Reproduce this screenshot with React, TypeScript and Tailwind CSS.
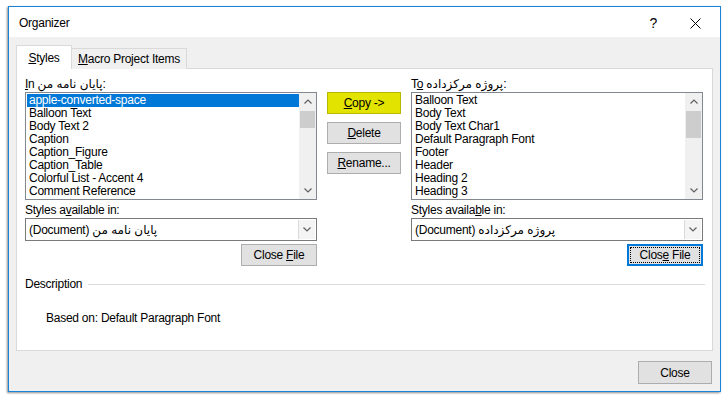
import React from 'react';

const FONT = "font-['Liberation_Sans','DejaVu_Sans',sans-serif]";

const LEFT_STYLES = [
    'apple-converted-space',
    'Balloon Text',
    'Body Text 2',
    'Caption',
    'Caption_Figure',
    'Caption_Table',
    'Colorful List - Accent 4',
    'Comment Reference',
];

const RIGHT_STYLES = [
    'Balloon Text',
    'Body Text',
    'Body Text Char1',
    'Default Paragraph Font',
    'Footer',
    'Header',
    'Heading 2',
    'Heading 3',
];

const Chevron: React.FC<{ dir: 'up' | 'down' }> = ({ dir }) => (
    <svg width="8" height="5" viewBox="0 0 8 5">
        <path
            d={dir === 'up' ? 'M0.5 4.5 L4 1 L7.5 4.5' : 'M0.5 0.5 L4 4 L7.5 0.5'}
            fill="none"
            stroke="#606060"
            strokeWidth="1.2"
        />
    </svg>
);

const ScrollBar: React.FC<{ thumb: string }> = ({ thumb }) => (
    <div className="w-[17px] h-full bg-[#f0f0f0] flex flex-col">
        <div className="h-[17px] flex items-center justify-center">
            <Chevron dir="up" />
        </div>
        <div className="flex-1 px-[1px] pt-[1px]">
            <div className={`${thumb} bg-[#cdcdcd]`} />
        </div>
        <div className="h-[17px] flex items-center justify-center">
            <Chevron dir="down" />
        </div>
    </div>
);

const StyleList: React.FC<{ items: string[]; selected?: number; thumb: string }> = ({ items, selected, thumb }) => (
    <div className="h-[108px] border border-[#828790] bg-white flex">
        <div className="flex-1 pl-[1px] pt-[1px]">
            {items.map((s, i) => (
                <div
                    key={s}
                    className={`h-[13px] leading-[13px] pl-[2px] whitespace-nowrap ${i === selected ? 'bg-[#0078d7] text-white' : 'text-black'}`}
                >
                    {s}
                </div>
            ))}
        </div>
        <ScrollBar thumb={thumb} />
    </div>
);

const Combo: React.FC<{ value: string }> = ({ value }) => (
    <div className="h-[23px] border border-[#7a7a7a] bg-white flex items-stretch">
        <div className="flex-1 flex items-center pl-[3px] whitespace-nowrap">{value}</div>
        <div className="w-[17px] my-[1px] mr-[1px] border-l border-[#dadada] bg-[#f4f4f4] flex items-center justify-center">
            <Chevron dir="down" />
        </div>
    </div>
);

const Btn: React.FC<{ children: React.ReactNode; className?: string }> = ({ children, className = '' }) => (
    <div className={`h-[22px] border border-[#adadad] bg-[#e1e1e1] flex items-center justify-center text-black ${className}`}>
        {children}
    </div>
);

const App: React.FC = () => {
    return (
        <div className={`w-[727px] h-[397px] bg-white pl-[8px] pt-[6px] text-[12px] tracking-[-0.25px] text-black ${FONT}`}>
            <div className="w-[713px] h-[386px] border border-[#1883d7] shadow-[-1px_1px_2px_rgba(0,0,0,0.45)] flex flex-col">
                {/* Title bar */}
                <div className="h-[30px] bg-white flex items-center pl-[10px] pt-[2px]">
                    <span className="text-[12px]">Organizer</span>
                    <span className="ml-auto mr-[33px] text-[14px] leading-none">?</span>
                    <svg width="11" height="11" viewBox="0 0 11 11" className="mr-[19px]">
                        <path d="M0.5 0.5 L10.5 10.5 M10.5 0.5 L0.5 10.5" stroke="#000" strokeWidth="1" />
                    </svg>
                </div>

                {/* Body */}
                <div className="flex-1 bg-[#f0f0f0] px-[7px] pt-[8px] flex flex-col">
                    {/* Tabs */}
                    <div className="h-[24px] flex items-end relative z-10 -mb-px">
                        <div className="w-[56px] h-[24px] bg-white border border-b-0 border-[#d9d9d9] flex items-center justify-center">
                            <span><span className="underline">S</span>tyles</span>
                        </div>
                        <div className="w-[115px] h-[21px] bg-[#f0f0f0] border border-l-0 border-b-0 border-[#d9d9d9] flex items-center justify-center">
                            <span><span className="underline">M</span>acro Project Items</span>
                        </div>
                    </div>

                    {/* Panel */}
                    <div className="w-[697px] h-[283px] bg-white border border-[#d9d9d9] pl-[8px] pr-[7px] flex flex-col">
                        <div className="flex">
                            {/* Left column */}
                            <div className="w-[292px] flex flex-col">
                                <div className="h-[23px] flex items-end leading-[15px]">
                                    <span><span className="underline">I</span>n پایان نامه من:</span>
                                </div>
                                <StyleList items={LEFT_STYLES} selected={0} thumb="h-[17px]" />
                                <div className="h-[18px] flex items-end leading-[15px]">
                                    <span>Styles a<span className="underline">v</span>ailable in:</span>
                                </div>
                                <Combo value="(Document) پایان نامه من" />
                                <Btn className="mt-[3px] w-[76px] self-end">
                                    <span>Close <span className="underline">F</span>ile</span>
                                </Btn>
                            </div>

                            {/* Buttons */}
                            <div className="w-[74px] ml-[10px] pt-[23px] flex flex-col gap-[8px]">
                                <Btn className="!bg-[#e3e300] !border-[#b8b800]">
                                    <span><span className="underline">C</span>opy -&gt;</span>
                                </Btn>
                                <Btn>
                                    <span><span className="underline">D</span>elete</span>
                                </Btn>
                                <Btn>
                                    <span><span className="underline">R</span>ename...</span>
                                </Btn>
                            </div>

                            {/* Right column */}
                            <div className="w-[292px] ml-[10px] flex flex-col">
                                <div className="h-[23px] flex items-end leading-[15px]">
                                    <span>T<span className="underline">o</span> پروژه مرکزداده:</span>
                                </div>
                                <StyleList items={RIGHT_STYLES} thumb="h-[27px]" />
                                <div className="h-[18px] flex items-end leading-[15px]">
                                    <span>Styles availa<span className="underline">b</span>le in:</span>
                                </div>
                                <Combo value="(Document) پروژه مرکزداده" />
                                <div className="mt-[3px] w-[76px] h-[22px] self-end border-2 border-[#0078d7] bg-[#e1e1e1] p-[1px]">
                                    <div className="h-full border border-dotted border-black flex items-center justify-center">
                                        <span>Clos<span className="underline">e</span> File</span>
                                    </div>
                                </div>
                            </div>
                        </div>

                        {/* Description */}
                        <div className="mt-[11px] h-[15px] flex items-center">
                            <span className="leading-[15px]">Description</span>
                            <div className="flex-1 h-px bg-[#dcdcdc] ml-[6px]" />
                        </div>
                        <div className="mt-[19px] pl-[21px] leading-[15px]">Based on: Default Paragraph Font</div>
                    </div>

                    {/* Footer */}
                    <div className="flex justify-end pr-[1px] mt-[10px]">
                        <Btn className="w-[74px] h-[23px]">Close</Btn>
                    </div>
                </div>
            </div>
        </div>
    );
};

export default App;
